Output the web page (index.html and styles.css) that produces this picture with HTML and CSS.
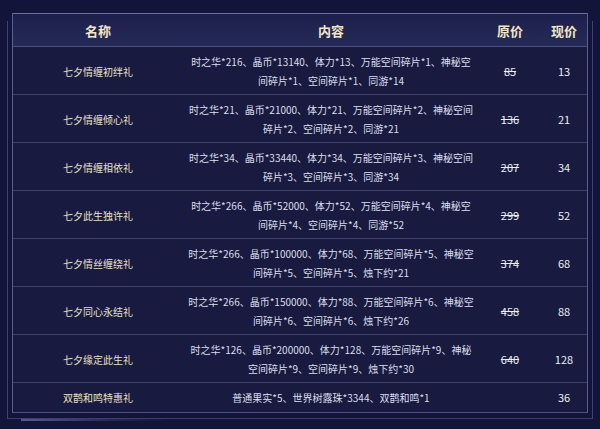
FILE: index.html
```html
<!DOCTYPE html>
<html lang="zh">
<head>
<meta charset="utf-8">
<link rel="stylesheet" href="styles.css">
</head>
<body>
<div class="panel">
  <table class="gifts">
    <thead>
      <tr><th class="c-name">名称</th><th class="c-content">内容</th><th class="c-orig">原价</th><th class="c-now">现价</th></tr>
    </thead>
    <tbody>
      <tr><td class="c-name">七夕情缠初绊礼</td><td class="c-content">时之华*216、晶币*13140、体力*13、万能空间碎片*1、神秘空间碎片*1、空间碎片*1、同游*14</td><td class="c-orig"><s>85</s></td><td class="c-now">13</td></tr>
      <tr><td class="c-name">七夕情缠倾心礼</td><td class="c-content">时之华*21、晶币*21000、体力*21、万能空间碎片*2、神秘空间碎片*2、空间碎片*2、同游*21</td><td class="c-orig"><s>136</s></td><td class="c-now">21</td></tr>
      <tr><td class="c-name">七夕情缠相依礼</td><td class="c-content">时之华*34、晶币*33440、体力*34、万能空间碎片*3、神秘空间碎片*3、空间碎片*3、同游*34</td><td class="c-orig"><s>207</s></td><td class="c-now">34</td></tr>
      <tr><td class="c-name">七夕此生独许礼</td><td class="c-content">时之华*266、晶币*52000、体力*52、万能空间碎片*4、神秘空间碎片*4、空间碎片*4、同游*52</td><td class="c-orig"><s>299</s></td><td class="c-now">52</td></tr>
      <tr><td class="c-name">七夕情丝缠绕礼</td><td class="c-content">时之华*266、晶币*100000、体力*68、万能空间碎片*5、神秘空间碎片*5、空间碎片*5、烛下约*21</td><td class="c-orig"><s>374</s></td><td class="c-now">68</td></tr>
      <tr><td class="c-name">七夕同心永结礼</td><td class="c-content">时之华*266、晶币*150000、体力*88、万能空间碎片*6、神秘空间碎片*6、空间碎片*6、烛下约*26</td><td class="c-orig"><s>458</s></td><td class="c-now">88</td></tr>
      <tr><td class="c-name">七夕缘定此生礼</td><td class="c-content">时之华*126、晶币*200000、体力*128、万能空间碎片*9、神秘空间碎片*9、空间碎片*9、烛下约*30</td><td class="c-orig"><s>640</s></td><td class="c-now">128</td></tr>
      <tr><td class="c-name">双鹊和鸣特惠礼</td><td class="c-content">普通果实*5、世界树露珠*3344、双鹊和鸣*1</td><td class="c-orig"></td><td class="c-now">36</td></tr>
    </tbody>
  </table>
</div>
</body>
</html>
```

FILE: styles.css
```css
html, body {
  margin: 0;
  padding: 0;
}
body {
  width: 600px;
  height: 429px;
  overflow: hidden;
  background: #13143a;
  font-family: "Noto Sans CJK SC", "Noto Sans", sans-serif;
  padding-top: 13px;
  box-sizing: border-box;
}
.panel {
  position: relative;
  margin: 0 12px;
  border-top: 1px solid #6a6fa6;
  border-left: 1px solid #5b5f92;
  border-right: 1px solid #5b5f92;
  border-bottom: 1px solid #4d5184;
  background: #181a3f;
}
.panel::before {
  content: "";
  position: absolute;
  left: -6px;
  right: -6px;
  top: 7px;
  bottom: -7px;
  border-left: 1px solid #3c4073;
  border-right: 1px solid #3c4073;
  border-bottom: 1px solid #3a3e70;
  pointer-events: none;
}
.panel::after {
  content: "";
  position: absolute;
  left: 8px;
  bottom: -9px;
  width: 150px;
  height: 2px;
  background: linear-gradient(90deg, rgba(150,160,220,0.5), rgba(150,160,220,0.15) 60%, rgba(150,160,220,0));
  pointer-events: none;
}
.gifts {
  width: 100%;
  border-collapse: collapse;
  table-layout: fixed;
}
.gifts th {
  height: 32px;
  padding: 0;
  font-size: 13px;
  font-weight: bold;
  color: #f3e6c6;
  background: linear-gradient(180deg, #1c1f4a 0%, #262a58 100%);
  border-bottom: 1px solid #4a4e80;
}
.gifts td {
  padding: 5px 0 4px;
  line-height: 19px;
  font-size: 10px;
  text-align: center;
  border-bottom: 1px solid #3b3f70;
  color: #dcdfec;
}
.gifts tbody tr:last-child td {
  border-bottom: none;
  padding: 5px 0 5px;
}
.c-name { width: 170px; }
.c-orig { width: 62px; }
.c-now { width: 46px; }
td.c-name {
  color: #ece1c7;
}
td.c-content {
  padding-left: 4px;
  padding-right: 4px;
}
td.c-orig, td.c-now {
  font-size: 11px;
  color: #eceef5;
}
```
